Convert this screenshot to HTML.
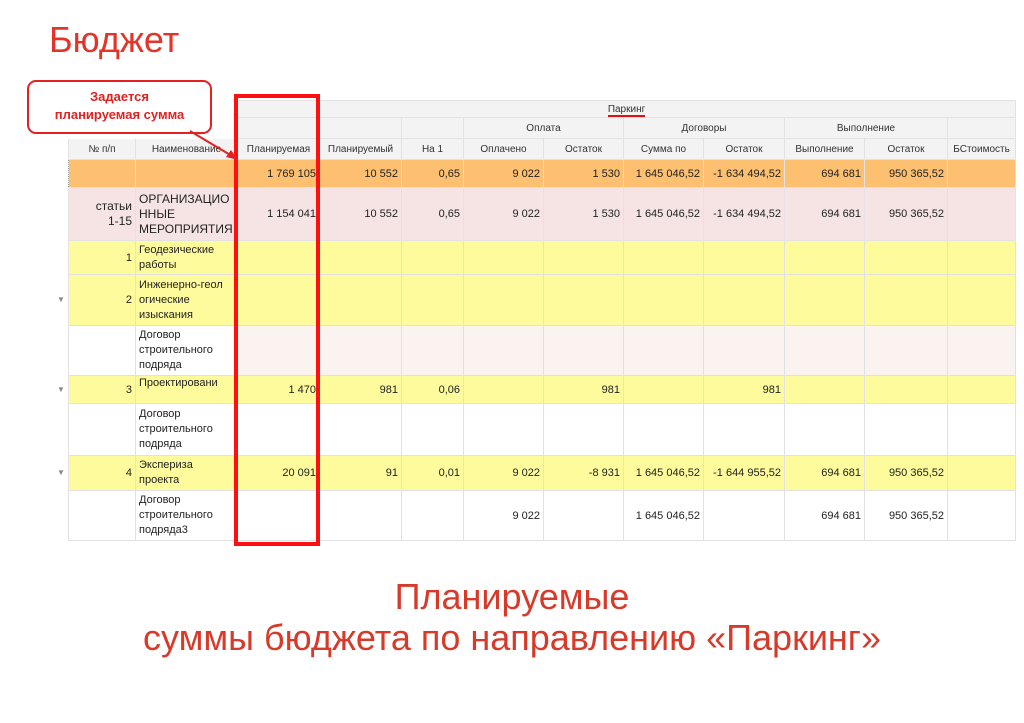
<!DOCTYPE html>
<html><head><meta charset="utf-8"><style>
body{margin:0;width:1024px;height:723px;background:#fff;position:relative;overflow:hidden;font-family:"Liberation Sans","Noto Sans CJK SC",sans-serif}
.t{position:absolute;left:68px;top:100px;width:947px;border-collapse:collapse;table-layout:fixed;font-size:11px;color:#222}
.t td{border:1px solid #e2e2e2;padding:0 3px;text-align:right;vertical-align:middle;overflow:hidden;white-space:nowrap}
.t td.n{text-align:left;line-height:15px;font-size:11px}
.h td{background:#f3f3f3;text-align:center;color:#333;font-size:10px}
.o td{background:#fdbf70}
.p td{background:#f6e4e4}
.y td{background:#fefb9c}
.w td{background:#fff}
.arr{position:absolute;left:57px;color:#888;font-size:8px}
</style></head><body>
<div style="position:absolute;left:49px;top:19px;font-size:36px;color:#e5332a">Бюджет</div>
<table class="t">
<colgroup><col style="width:67px"><col style="width:102px"><col style="width:82px"><col style="width:82px"><col style="width:62px"><col style="width:80px"><col style="width:80px"><col style="width:80px"><col style="width:81px"><col style="width:80px"><col style="width:83px"><col style="width:68px"></colgroup>
<tr class="h" style="height:17px"><td style="background:#fff;border-color:#fff"></td><td style="background:#fff;border-color:#fff"></td><td colspan="10" style="text-align:center"><span style="border-bottom:2px solid #e01010">Паркинг</span></td></tr>
<tr class="h" style="height:21px"><td style="background:#fff;border-color:#fff"></td><td style="background:#fff;border-color:#fff"></td><td></td><td></td><td></td><td colspan="2">Оплата</td><td colspan="2">Договоры</td><td colspan="2">Выполнение</td><td></td></tr>
<tr class="h" style="height:21px"><td>№ п/п</td><td>Наименование</td><td>Планируемая</td><td>Планируемый</td><td>На 1</td><td>Оплачено</td><td>Остаток</td><td>Сумма по</td><td>Остаток</td><td>Выполнение</td><td>Остаток</td><td>БСтоимость</td></tr>
<tr class="o" style="height:28px"><td style="border:1px dotted #999"></td><td></td><td>1 769 105</td><td>10 552</td><td>0,65</td><td>9 022</td><td>1 530</td><td>1 645 046,52</td><td>-1 634 494,52</td><td>694 681</td><td>950 365,52</td><td></td></tr>
<tr class="p" style="height:53px"><td style="font-size:12px;line-height:15px">статьи<br>1-15</td><td class="n" style="font-size:12px">ОРГАНИЗАЦИО<br>ННЫЕ<br>МЕРОПРИЯТИЯ</td><td>1 154 041</td><td>10 552</td><td>0,65</td><td>9 022</td><td>1 530</td><td>1 645 046,52</td><td>-1 634 494,52</td><td>694 681</td><td>950 365,52</td><td></td></tr>
<tr class="y" style="height:34px"><td>1</td><td class="n">Геодезические<br>работы</td><td></td><td></td><td></td><td></td><td></td><td></td><td></td><td></td><td></td><td></td></tr>
<tr class="y" style="height:51px"><td>2</td><td class="n">Инженерно-геол<br>огические<br>изыскания</td><td></td><td></td><td></td><td></td><td></td><td></td><td></td><td></td><td></td><td></td></tr>
<tr class="w" style="height:50px"><td></td><td class="n">Договор<br>строительного<br>подряда</td><td style="background:#fbf3f0"></td><td style="background:#fbf3f0"></td><td style="background:#fbf3f0"></td><td style="background:#fbf3f0"></td><td style="background:#fbf3f0"></td><td style="background:#fbf3f0"></td><td style="background:#fbf3f0"></td><td style="background:#fbf3f0"></td><td style="background:#fbf3f0"></td><td style="background:#fbf3f0"></td></tr>
<tr class="y" style="height:28px"><td>3</td><td class="n" style="vertical-align:top">Проектировани</td><td>1 470</td><td>981</td><td>0,06</td><td></td><td>981</td><td></td><td>981</td><td></td><td></td><td></td></tr>
<tr class="w" style="height:52px"><td></td><td class="n">Договор<br>строительного<br>подряда</td><td></td><td></td><td></td><td></td><td></td><td></td><td></td><td></td><td></td><td></td></tr>
<tr class="y" style="height:35px"><td>4</td><td class="n">Экспериза<br>проекта</td><td>20 091</td><td>91</td><td>0,01</td><td>9 022</td><td>-8 931</td><td>1 645 046,52</td><td>-1 644 955,52</td><td>694 681</td><td>950 365,52</td><td></td></tr>
<tr class="w" style="height:50px"><td></td><td class="n">Договор<br>строительного<br>подряда3</td><td></td><td></td><td></td><td>9 022</td><td></td><td>1 645 046,52</td><td></td><td>694 681</td><td>950 365,52</td><td></td></tr>
</table>
<div class="arr" style="top:295px">▼</div><div class="arr" style="top:385px">▼</div><div class="arr" style="top:468px">▼</div>
<div style="position:absolute;left:234px;top:94px;width:78px;height:444px;border:4px solid #ff1010"></div>
<div style="position:absolute;left:27px;top:80px;border:2px solid #e42020;border-radius:9px;background:#fff;text-align:center;color:#e42020;font-weight:bold;font-size:13px;line-height:18px;padding-top:6px;box-sizing:border-box;width:185px;height:54px">Задается<br>планируемая сумма</div>
<svg style="position:absolute;left:0;top:0" width="1024" height="723"><line x1="190" y1="131" x2="232" y2="156" stroke="#e42020" stroke-width="2"/><polygon points="238,160 226,157 231,150" fill="#e42020"/></svg>
<div style="position:absolute;left:0;width:1024px;top:576px;text-align:center;font-size:36px;line-height:41px;color:#d83a2a">Планируемые<br>суммы бюджета по направлению «Паркинг»</div>
</body></html>
